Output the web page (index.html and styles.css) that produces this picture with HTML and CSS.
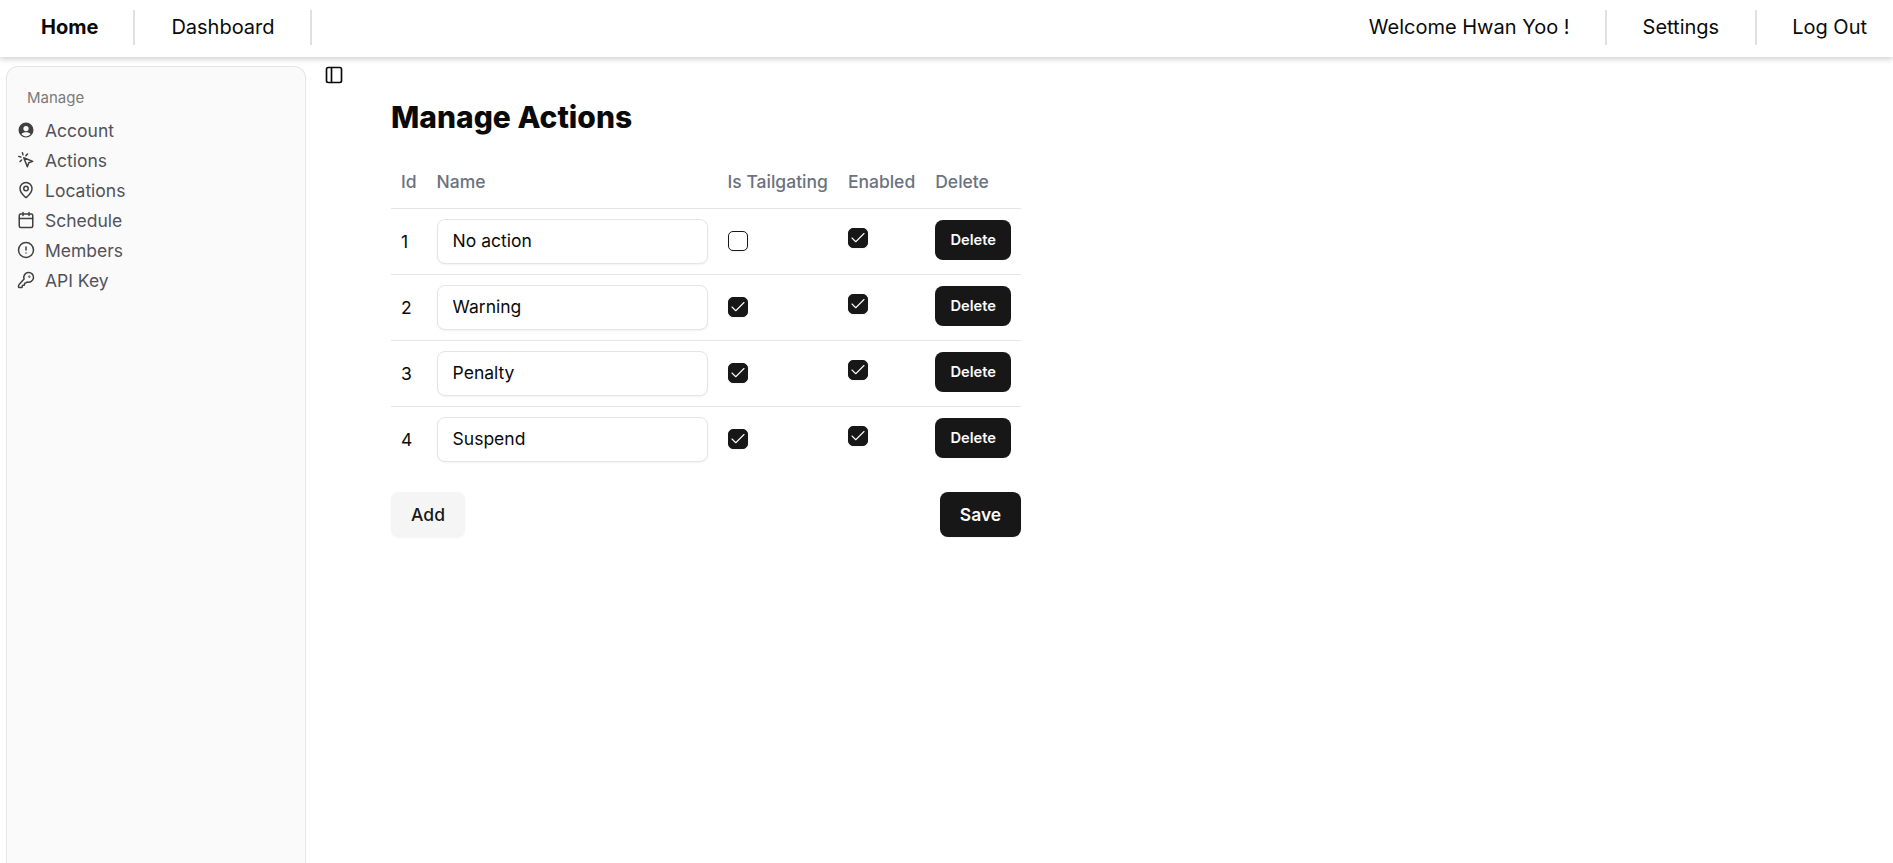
FILE: index.html
```html
<!DOCTYPE html>
<html lang="en">
<head>
<meta charset="utf-8">
<title>Manage Actions</title>
<link rel="stylesheet" href="styles.css">
</head>
<body>
<header class="topbar">
  <nav class="nav-group">
    <a class="nav-item nav-bold nav-div nav-tight">Home</a>
    <a class="nav-item nav-div nav-tight">Dashboard</a>
  </nav>
  <nav class="nav-group">
    <a class="nav-item nav-div nav-tight">Welcome Hwan Yoo !</a>
    <a class="nav-item nav-div">Settings</a>
    <a class="nav-item nav-last">Log Out</a>
  </nav>
</header>
<div class="layout">
  <aside class="sidebar">
    <div class="side-label">Manage</div>
    <a class="side-item">
      <svg class="ico" viewBox="0 0 24 24"><path class="solid" fill-rule="evenodd" d="M12 2a10 10 0 1 0 0 20 10 10 0 0 0 0-20zm0 4.500a3.500 3.500 0 1 1 0 7 3.500 3.500 0 0 1 0-7zM5.900 17.600C7 15.800 9.300 15 12 15s5 .8 6.100 2.600A8 8 0 0 1 12 20.500a8 8 0 0 1-6.100-2.900z"/></svg>
      <span>Account</span>
    </a>
    <a class="side-item">
      <svg class="ico" viewBox="0 0 24 24"><path d="M9 9l4.800 12 1.900-5.300L21 13.800z"/><path d="M7.200 2.200l.8 2.900M5.100 8l-2.900-.8M14 4.100l-2.100 2.100M6.200 11.900l-2.100 2.100"/></svg>
      <span>Actions</span>
    </a>
    <a class="side-item">
      <svg class="ico" viewBox="0 0 24 24"><path d="M20 10c0 5-5.500 10.200-7.400 11.800a1 1 0 0 1-1.200 0C9.500 20.200 4 15 4 10a8 8 0 0 1 16 0"/><circle cx="12" cy="10" r="3"/></svg>
      <span>Locations</span>
    </a>
    <a class="side-item">
      <svg class="ico" viewBox="0 0 24 24"><path d="M8 2v4M16 2v4"/><rect x="3" y="4" width="18" height="18" rx="2"/><path d="M3 10h18"/></svg>
      <span>Schedule</span>
    </a>
    <a class="side-item">
      <svg class="ico" viewBox="0 0 24 24"><circle cx="12" cy="12" r="10"/><path d="M12 8v4M12 16h.01"/></svg>
      <span>Members</span>
    </a>
    <a class="side-item">
      <svg class="ico" viewBox="0 0 24 24"><path d="M2.600 18.400A2 2 0 0 0 2 19.800V21a1 1 0 0 0 1 1h3a1 1 0 0 0 1-1v-1a1 1 0 0 1 1-1h1a1 1 0 0 0 1-1v-1a1 1 0 0 1 1-1h.2a2 2 0 0 0 1.400-.6l.8-.8a6.500 6.500 0 1 0-4-4z"/><circle cx="16.500" cy="7.500" r=".5"/></svg>
      <span>API Key</span>
    </a>
  </aside>
  <div class="toggle-col">
    <svg class="toggle" viewBox="0 0 24 24"><rect x="3" y="3" width="18" height="18" rx="2"/><path d="M9 3v18"/></svg>
  </div>
  <main class="content">
    <h1 class="title">Manage Actions</h1>
    <table class="grid">
      <thead>
        <tr><th>Id</th><th>Name</th><th>Is Tailgating</th><th>Enabled</th><th>Delete</th></tr>
      </thead>
      <tbody>
        <tr>
          <td>1</td>
          <td><input class="name" type="text" value="No action"></td>
          <td><span class="box"></span></td>
          <td class="raised"><span class="box on"><svg viewBox="0 0 24 24"><path d="M20 6L9 17l-5-5"/></svg></span></td>
          <td><button class="btn-del">Delete</button></td>
        </tr>
        <tr>
          <td>2</td>
          <td><input class="name" type="text" value="Warning"></td>
          <td><span class="box on"><svg viewBox="0 0 24 24"><path d="M20 6L9 17l-5-5"/></svg></span></td>
          <td class="raised"><span class="box on"><svg viewBox="0 0 24 24"><path d="M20 6L9 17l-5-5"/></svg></span></td>
          <td><button class="btn-del">Delete</button></td>
        </tr>
        <tr>
          <td>3</td>
          <td><input class="name" type="text" value="Penalty"></td>
          <td><span class="box on"><svg viewBox="0 0 24 24"><path d="M20 6L9 17l-5-5"/></svg></span></td>
          <td class="raised"><span class="box on"><svg viewBox="0 0 24 24"><path d="M20 6L9 17l-5-5"/></svg></span></td>
          <td><button class="btn-del">Delete</button></td>
        </tr>
        <tr class="last">
          <td>4</td>
          <td><input class="name" type="text" value="Suspend"></td>
          <td><span class="box on"><svg viewBox="0 0 24 24"><path d="M20 6L9 17l-5-5"/></svg></span></td>
          <td class="raised"><span class="box on"><svg viewBox="0 0 24 24"><path d="M20 6L9 17l-5-5"/></svg></span></td>
          <td><button class="btn-del">Delete</button></td>
        </tr>
      </tbody>
    </table>
    <div class="actions">
      <button class="btn btn-add">Add</button>
      <button class="btn btn-save">Save</button>
    </div>
  </main>
</div>
</body>
</html>
```
FILE: styles.css
```css
* { box-sizing: border-box; }
html, body { height: 100%; }
body {
  margin: 0;
  display: flex;
  flex-direction: column;
  height: 863px;
  overflow: hidden;
  background: #fff;
  color: #0a0a0a;
  font-family: Inter, "Liberation Sans", sans-serif;
}
.topbar {
  height: 57px;
  flex: none;
  display: flex;
  justify-content: space-between;
  align-items: center;
  padding: 0 0 2px 5px;
  background: #fff;
  box-shadow: 0 2px 6px rgba(0,0,0,.2);
  position: relative;
}
.nav-group { display: flex; align-items: center; }
.nav-item {
  height: 35px;
  display: flex;
  align-items: center;
  padding: 0 36px 1px;
  font-size: 20px;
  color: #0a0a0a;
}
.nav-div { border-right: 2px solid #e0e0e0; }
.nav-tight { padding-right: 35px; }
.nav-bold { font-weight: 700; }
.nav-last { padding: 0 26px 1px 35px; }
.layout { flex: 1; display: flex; min-height: 0; }
.sidebar {
  width: 300px;
  margin: 9px 0 0 6px;
  padding: 21px 0 0 10px;
  background: #fafafa;
  border: 1px solid #e5e5e5;
  border-bottom: 0;
  border-radius: 12px 12px 0 0;
  box-shadow: 0 1px 2px rgba(0,0,0,.05);
  flex: none;
}
.side-label {
  height: 20px;
  line-height: 20px;
  padding-left: 10px;
  font-size: 15px;
  font-weight: 400;
  color: #7a7a7a;
  margin-bottom: 7px;
}
.side-item {
  height: 30px;
  display: flex;
  align-items: center;
  gap: 10px;
  font-size: 17.5px;
  color: #52525b;
}
.ico {
  width: 18px;
  height: 18px;
  flex: none;
  fill: none;
  stroke: #404040;
  stroke-width: 2;
  stroke-linecap: round;
  stroke-linejoin: round;
}
.ico .solid { fill: #404040; stroke: none; }
.toggle-col { width: 85px; flex: none; padding: 8px 0 0 18px; }
.toggle {
  display: block;
  width: 20px;
  height: 20px;
  fill: none;
  stroke: #0a0a0a;
  stroke-width: 2;
  stroke-linecap: round;
  stroke-linejoin: round;
}
.content { width: 630px; flex: none; padding-top: 42px; }
.title {
  margin: 0 0 22px;
  font-size: 30px;
  line-height: 36px;
  font-weight: 800;
}
.grid { width: 630px; border-collapse: collapse; font-size: 17.5px; }
.grid th {
  height: 51px;
  padding: 0 10px 1px;
  text-align: left;
  font-weight: 500;
  color: #6b7280;
  white-space: nowrap;
  border-bottom: 1px solid #e5e5e5;
}
.grid td {
  height: 66px;
  padding: 0 10px;
  border-bottom: 1px solid #e5e5e5;
}
.grid .last td { border-bottom: 0; }
.name {
  display: block;
  width: 271px;
  height: 45px;
  padding: 0 15px 1px;
  font: 17.5px Inter, "Liberation Sans", sans-serif;
  color: #0a0a0a;
  background: #fff;
  border: 1px solid #e5e5e5;
  border-radius: 8px;
  box-shadow: 0 1px 2px rgba(0,0,0,.05);
}
.box {
  display: block;
  width: 20px;
  height: 20px;
  border: 1px solid #171717;
  border-radius: 5px;
  background: #fff;
  box-shadow: 0 1px 2px rgba(0,0,0,.05);
}
.box.on { background: #171717; }
.box svg {
  display: block;
  width: 18px;
  height: 18px;
  fill: none;
  stroke: #fafafa;
  stroke-width: 1.5;
  stroke-linecap: round;
  stroke-linejoin: round;
}
.raised .box { margin-bottom: 7px; }
.btn-del {
  display: block;
  width: 76px;
  height: 40px;
  margin-bottom: 2px;
  padding: 0;
  border: 0;
  border-radius: 8px;
  background: #171717;
  color: #fafafa;
  font: 600 14.7px Inter, "Liberation Sans", sans-serif;
}
.actions { display: flex; justify-content: space-between; margin-top: 20px; }
.btn {
  height: 45px;
  padding: 0;
  border: 0;
  border-radius: 8px;
  font: 500 17.5px Inter, "Liberation Sans", sans-serif;
  box-shadow: 0 1px 2px rgba(0,0,0,.05);
}
.btn-add { width: 74px; background: #f5f5f5; color: #171717; }
.btn-save { width: 81px; background: #171717; color: #fafafa; font-weight: 600; }
```
